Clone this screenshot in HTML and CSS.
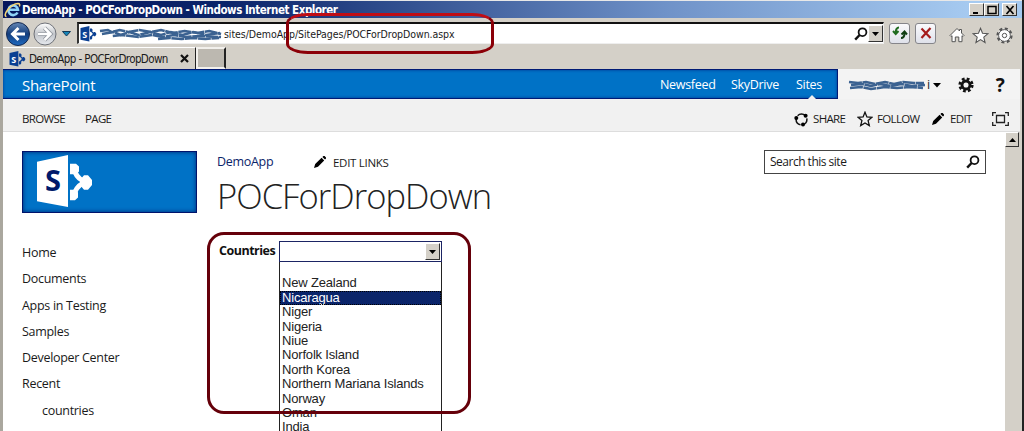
FILE: index.html
```html
<!DOCTYPE html>
<html lang="en">
<head>
  <meta charset="UTF-8">
  <title>DemoApp - POCForDropDown</title>
  <link rel="stylesheet" href="styles.css">
</head>
<body>

<svg class="sprites" width="0" height="0">
  <symbol id="sp" viewBox="0 0 56 56">
    <path class="sp-ring" d="M33 14h4c1 6 4 10 9 13h4M33 42h4c1-6 4-10 9-13"/>
    <path class="sp-node" d="M33 9h6l3 3v5l-3 3h-6zM33 36h6l2 3v5l-3 3h-5zM47 21h4l4 5v5l-4 5h-4l-4-5v-5z"/>
    <path class="sp-door" d="M0 7L31 0v54L0 48z"/>
  </symbol>
  <symbol id="pencil" viewBox="0 0 12 12">
    <path d="M0 12l1.200-4L7.600 1.800l2.600 2.600L4 10.800zM8.400 1l1-1h1.200L12 1.400v1.200l-1 1z"/>
  </symbol>
  <symbol id="glass" viewBox="0 0 14 14">
    <circle cx="8.500" cy="5.200" r="3.900" fill="none" stroke="#111" stroke-width="1.800"/>
    <path d="M5.600 8L1.200 12.600" stroke="#111" stroke-width="2.400"/>
  </symbol>
  <symbol id="star" viewBox="0 0 16 16">
    <path d="M8 1.200l1.900 4.700 5.100.4-3.900 3.300 1.200 5L8 11.900l-4.300 2.700 1.200-5L1 6.300l5.100-.4z"/>
  </symbol>
</svg>

<div class="window">
  <header class="titlebar">
    <svg class="ie" width="18" height="16" viewBox="0 0 18 16">
      <path d="M13.500 10.500A4.800 4.800 0 1 1 14 7.800H5.500" fill="none" stroke="#8fd4f8" stroke-width="2.600"/>
      <path d="M2.500 14.500C-2 14 6 2 14 1.500c2 0 2 1.500 1.300 3" fill="none" stroke="#f6d674" stroke-width="1.500"/>
    </svg>
    <span class="title">DemoApp - POCForDropDown - Windows Internet Explorer</span>
    <div class="window-buttons">
      <button><svg width="12" height="10"><path d="M2 8h5" stroke="#000" stroke-width="2"/></svg></button>
      <button><svg width="12" height="10"><path d="M2 1.500h8v7H2z" fill="none" stroke="#000" stroke-width="1.500"/></svg></button>
      <button class="close"><svg width="12" height="10"><path d="M2.500 1l7 8m0-8l-7 8" stroke="#000" stroke-width="1.700"/></svg></button>
    </div>
  </header>

  <div class="address-row">
    <svg class="nav" width="64" height="26" viewBox="0 0 64 26">
      <defs>
        <linearGradient id="back" x2="0" y2="1"><stop stop-color="#6587b5"/><stop offset=".5" stop-color="#123d7d"/><stop offset="1" stop-color="#1f6ac0"/></linearGradient>
        <linearGradient id="fwd" x2="0" y2="1"><stop stop-color="#fff"/><stop offset=".5" stop-color="#c3c6cb"/><stop offset="1" stop-color="#e6e9ee"/></linearGradient>
      </defs>
      <circle cx="15" cy="13" r="11.500" fill="url(#back)" stroke="#14284f"/>
      <circle cx="42" cy="13" r="11" fill="url(#fwd)" stroke="#6e7178"/>
      <path d="M22 13H10m5.500-6L9.500 13l6 6" fill="none" stroke="#fff" stroke-width="3"/>
      <path d="M35 13h12m-5.500-6l6 6-6 6" fill="none" stroke="#8d929a" stroke-width="4"/>
      <path d="M35 13h12m-5.500-6l6 6-6 6" fill="none" stroke="#fff" stroke-width="2.500"/>
    </svg>
    <svg class="nav-arrow" width="9" height="6"><path d="M.5.500h8L4.500 5z" fill="#1585b8" stroke="#143a58"/></svg>
    <div class="address">
      <svg class="favicon" width="17" height="16" viewBox="0 0 17 16"><use href="#sp" width="17" height="16" /><text x="2.200" y="11.500">S</text></svg>
      <span class="url"><svg class="scribble" width="125" height="14" viewBox="0 0 127 14" preserveAspectRatio="none">
          <path d="M1 4l8-1 4 2 8-2 9 2 11-2 12 2 10-2 12 3 12-2 13 2 12-2 12 3" />
          <path d="M3 7l12-2 7 3 9-3 9 3 12-3 11 3 10-3 12 3 11-3 13 3 14-2" />
          <path d="M14 9l9-1 9 1 8 1 14-2 10 2 12-2 12 2 14-1 22 1" />
          <path d="M60 12l12-1 12 1 12-1 12 1 14-1" />
        </svg><span class="path">sites/DemoApp/SitePages/POCForDropDown.aspx</span></span>
      <svg class="address-glass" width="14" height="14"><use href="#glass" /></svg>
      <button class="drop"><svg width="7" height="4"><path d="M0 0h7L3.500 4z"/></svg></button>
    </div>
    <button class="tool refresh"><svg width="18" height="16" viewBox="0 0 18 16"><path d="M8 2.500C6 2.500 4.700 4 4.700 8M2 6l2.700 3L7.500 6" fill="none" stroke="#1f6b1f" stroke-width="2"/><path d="M10 13c2.500 0 3.500-2 3.500-5M10.500 9.500L13.500 6.500l2.500 3" fill="none" stroke="#123f14" stroke-width="2"/></svg></button>
    <button class="tool"><svg width="14" height="14" viewBox="0 0 14 14"><path d="M2.500 2.500l9 9.500M11.500 2l-9 10" stroke="#a51c1c" stroke-width="2.200"/></svg></button>
    <div class="commands">
      <svg width="16" height="16" viewBox="0 0 16 16"><path d="M1 8.500l7-7 2.500 2.500V2.500h2V6L15 8.500l-1 1-1-.8v6H9.800V10H6.300v4.700H3v-6l-1 .8z"/></svg>
      <svg width="17" height="17"><use href="#star" /></svg>
      <svg width="17" height="17" viewBox="0 0 17 17"><circle cx="8.500" cy="8.500" r="6.900" stroke-width="2.400" stroke-dasharray="3 2.420"/><circle class="gear-body" cx="8.500" cy="8.500" r="5.900"/><circle cx="8.500" cy="8.500" r="2.200"/></svg>
    </div>
  </div>

  <div class="tabs">
    <div class="tab">
      <svg class="favicon" width="17" height="16" viewBox="0 0 17 16"><use href="#sp" width="17" height="16" /><text x="2.200" y="11.500">S</text></svg>
      <span class="tab-title">DemoApp - POCForDropDown</span>
      <svg class="tab-close" width="9" height="9"><path d="M1 1l7 7m0-7L1 8" stroke="#111" stroke-width="2.200"/></svg>
    </div>
    <div class="new-tab"></div>
  </div>

  <main class="page">
    <div class="suite">
      <nav class="suite-bar">
        <span class="brand">SharePoint</span>
        <span class="newsfeed">Newsfeed</span>
        <span class="skydrive">SkyDrive</span>
        <span class="sites active">Sites</span>
      </nav>
      <div class="suite-user">
        <span class="user"><svg class="scribble" width="79" height="14" viewBox="0 0 79 14">
          <path d="M1 4l9 1 8-1 9 2 10-2 9 2 9-2 11 1 10 0"/>
          <path d="M3 7l11-1 9 2 9-2 11 2 10-2 11 2 13-1"/>
          <path d="M2 10l11-1 10 2 14-2 12 1 12-1 14 1"/>
        </svg><span class="name-end">i</span></span>
        <svg class="caret" width="8" height="5"><path d="M0 0h8L4 4.500z"/></svg>
        <svg class="settings" width="16" height="16" viewBox="0 0 16 16"><circle cx="8" cy="8" r="6.200" fill="none" stroke="#111" stroke-width="2.800" stroke-dasharray="2.700 2.170"/><circle cx="8" cy="8" r="4" fill="none" stroke="#111" stroke-width="2.900"/></svg>
        <span class="help">?</span>
      </div>
    </div>

    <div class="ribbon">
      <span class="browse">BROWSE</span>
      <span class="page-tab">PAGE</span>
      <div class="actions">
        <svg width="15" height="15" viewBox="0 0 15 15"><circle cx="7.500" cy="7.500" r="5.400" fill="none" stroke="#111" stroke-width="1.500" stroke-dasharray="8.300 3" stroke-dashoffset="2"/><circle cx="2.300" cy="6" r="2"/><circle cx="11.600" cy="3.700" r="2"/><circle cx="9" cy="12.600" r="2"/></svg>
        <span class="share">SHARE</span>
        <svg class="follow-star" width="16" height="16"><use href="#star" /></svg>
        <span class="follow">FOLLOW</span>
        <svg class="edit-icon" width="12" height="12"><use href="#pencil" /></svg>
        <span class="edit">EDIT</span>
        <svg class="focus" width="17" height="14" viewBox="0 0 17 14"><path d="M4.500 3.500h8v7h-8zM.7 4V.7H4M13 .7h3.300V4M16.300 10v3.300H13M4 13.300H.7V10" fill="none" stroke="#222" stroke-width="1.300"/></svg>
      </div>
    </div>

    <div class="body">
      <aside class="sidebar">
        <div class="logo"><svg width="56" height="54" viewBox="0 0 56 56" preserveAspectRatio="none"><use href="#sp" width="56" height="56" /><text x="8" y="37">S</text></svg></div>
        <ul class="links">
          <li>Home</li>
          <li>Documents</li>
          <li>Apps in Testing</li>
          <li>Samples</li>
          <li>Developer Center</li>
          <li>Recent</li>
          <li class="sub">countries</li>
        </ul>
      </aside>
      <section class="content">
        <div class="top-links">
          <span class="app-link">DemoApp</span>
          <svg width="12" height="12"><use href="#pencil" /></svg>
          <span class="edit-links">EDIT LINKS</span>
        </div>
        <h1>POCForDropDown</h1>
        <div class="field">
          <label>Countries</label>
          <div class="select">
            <div class="select-box"><button class="drop"><svg width="7" height="4"><path d="M0 0h7L3.500 4z"/></svg></button></div>
            <ul class="options">
              <li></li>
              <li>New Zealand</li>
              <li class="selected">Nicaragua</li>
              <li>Niger</li>
              <li>Nigeria</li>
              <li>Niue</li>
              <li>Norfolk Island</li>
              <li>North Korea</li>
              <li>Northern Mariana Islands</li>
              <li>Norway</li>
              <li>Oman</li>
              <li>India</li>
            </ul>
          </div>
        </div>
      </section>
      <div class="search"><span>Search this site</span><svg width="14" height="14"><use href="#glass" /></svg></div>
      <div class="scrollbar"><button><svg width="7" height="4"><path d="M0 4h7L3.500 0z"/></svg></button></div>
    </div>
  </main>
</div>

<div class="mark mark-url"></div>
<div class="mark mark-list"></div>

</body>
</html>
```

FILE: styles.css
```css
* {
  box-sizing: border-box;
}

body {
  margin: 0;
  width: 1024px;
  height: 431px;
  overflow: hidden;
  background: #d4d0c8;
  color: #1a1a1a;
  font: 12.500px/16px "Open Sans", sans-serif;
  letter-spacing: -.3px;
}

svg {
  display: block;
  flex: none;
}

span, label {
  white-space: nowrap;
}

ul {
  list-style: none;
  margin: 0;
  padding: 0;
}

button {
  display: flex;
  align-items: center;
  justify-content: center;
  padding: 0;
  flex: none;
}

.sprites {
  position: absolute;
}

.window {
  height: 431px;
  border-left: 3px solid #aaa79e;
  border-right: 2px solid #222;
  display: flex;
  flex-direction: column;
}

/* sharepoint mark */
.favicon {
  margin-left: 1px;
  color: #0a3f92;
}

.favicon text {
  font: bold 9px "Open Sans", sans-serif;
  fill: #fff;
}

.logo {
  color: #fff;
}

.logo text {
  font: bold 29px "Open Sans", sans-serif;
  fill: #001a6b;
}

.sp-door, .sp-node {
  fill: currentColor;
}

.sp-ring {
  fill: none;
  stroke: currentColor;
  stroke-width: 5;
}

/* title bar */
.titlebar {
  height: 18px;
  flex: none;
  padding-right: 5px;
  border-top: 1px solid #e8e8e8;
  display: flex;
  align-items: center;
  background: linear-gradient(90deg, #06175c, #0a246a 22%, #6f92c8 65%, #a6caf0 95%);
}

.ie {
  margin-left: 1px;
}

.title {
  font: bold 11.500px/16px "DejaVu Sans Condensed", "DejaVu Sans", sans-serif;
  letter-spacing: -.46px;
  color: #fff;
}

.window-buttons {
  margin-left: auto;
  display: flex;
}

.window-buttons button, .drop, .scrollbar button {
  background: #d4d0c8;
  border: 1px solid;
  border-color: #fff #333 #333 #fff;
}

.window-buttons button {
  width: 15px;
  height: 13px;
}

.window-buttons .close {
  margin-left: 3px;
}

/* address bar */
.address-row {
  height: 29px;
  flex: none;
  display: flex;
  align-items: center;
  padding-top: 3px;
}

.nav-arrow {
  margin: 0 6px 0 -5px;
}

.address {
  width: 807px;
  height: 22px;
  margin-top: -2px;
  background: #fff;
  border: 1px solid #eee;
  border-top: 2px solid #111;
  border-left: 2px solid #333;
  display: flex;
  align-items: center;
}

.url {
  display: flex;
  align-items: center;
  margin-left: 2px;
  padding-top: 1px;
  font: 10.500px/16px "DejaVu Sans Condensed", "DejaVu Sans", sans-serif;
  letter-spacing: -.06px;
}

.scribble path {
  fill: none;
  stroke: #3b6291;
  stroke-width: 2.500;
  stroke-dasharray: 13 .6;
}

.address-glass {
  margin-left: auto;
}

.drop {
  width: 15px;
  height: 17px;
}

.tool {
  width: 21px;
  height: 21px;
  margin-left: 5px;
  margin-top: -2px;
  border: 1px solid #85858a;
  border-radius: 3px;
  background: linear-gradient(#fafafc, #dfe1ea);
}

.commands {
  display: flex;
  gap: 7px;
  margin: 2px 0 0 13px;
  fill: #fff;
  stroke: #555;
}

.commands .gear-body {
  stroke-width: 1;
}

/* tabs */
.tabs {
  height: 22px;
  flex: none;
  display: flex;
}

.tab {
  width: 193px;
  display: flex;
  align-items: center;
  padding-left: 5px;
  border-top: 1px solid #fff;
  border-right: 1px solid #222;
}

.tab-title {
  width: 147px;
  margin-left: 3px;
  padding-top: 1px;
  font: 11.500px/16px "DejaVu Sans Condensed", "DejaVu Sans", sans-serif;
  letter-spacing: -.6px;
}

.tab-close {
  margin-left: 4px;
}

.new-tab {
  width: 30px;
  background: #bcb8b0;
  border: 2px solid #f2f0ec;
  border-right-color: #222;
}

/* page */
.page {
  flex: 1;
  min-height: 0;
  margin-right: 2px;
  background: #fff;
  display: flex;
  flex-direction: column;
}

.suite {
  height: 30px;
  flex: none;
  display: flex;
  background: #f3f3f3;
}

.suite-bar {
  width: 835px;
  height: 30px;
  display: flex;
  align-items: center;
  padding: 2px 0 0 19px;
  background: #0072c6;
  border: 1px solid #001a75;
  border-left: 0;
  box-shadow: inset 0 0 3px #00308c;
  color: #fff;
}

.brand {
  width: 638px;
  font-size: 15px;
  letter-spacing: -.35px;
}

.newsfeed {
  width: 71px;
}

.skydrive {
  width: 65px;
}

.active {
  position: relative;
}

.active::after {
  content: "";
  position: absolute;
  left: 12px;
  bottom: -6px;
  border: 4px solid transparent;
  border-top: 0;
  border-bottom-color: #f1f1f1;
}

.suite-user {
  display: flex;
  align-items: center;
  padding: 2px 0 0 10px;
}

.user {
  display: flex;
  align-items: center;
}

.caret {
  margin-left: 3px;
}

.settings {
  margin-left: 17px;
}

.help {
  margin-left: 22px;
  font: bold 19px/20px "Open Sans", sans-serif;
  color: #111;
}

.ribbon {
  height: 33px;
  flex: none;
  display: flex;
  align-items: center;
  padding: 8px 11px 0 19px;
  background: #f1f1f1;
  border-bottom: 1px solid #ddd;
  font-size: 11.500px;
  letter-spacing: -.65px;
}

.browse {
  width: 63px;
}

.actions {
  margin-left: auto;
  display: flex;
  align-items: center;
}

.share {
  width: 40px;
  margin-left: 4px;
}

.follow-star {
  margin-left: 4px;
  fill: none;
  stroke: #111;
  stroke-width: 1.300;
}

.follow {
  width: 50px;
  margin-left: 4px;
}

.edit-icon {
  margin-left: 5px;
}

.edit {
  width: 32px;
  margin-left: 6px;
}

.focus {
  margin-left: 10px;
}

.body {
  flex: 1;
  display: flex;
  min-height: 0;
}

.sidebar {
  width: 214px;
  padding: 19px 0 0 19px;
}

.logo {
  width: 175px;
  height: 62px;
  padding: 3px 0 0 14px;
  background: #0072c6;
  border: 1px solid #00136b;
  box-shadow: inset 0 0 4px #00246f;
}

.links {
  padding-top: 27px;
  line-height: 26.300px;
}

.sub {
  padding-left: 20px;
}

.content {
  width: 547px;
  padding-top: 22px;
}

.top-links {
  display: flex;
  align-items: center;
  height: 16px;
}

.app-link {
  width: 97px;
  color: #0a246a;
}

.edit-links {
  margin: 2px 0 0 7px;
  font-size: 11.500px;
  letter-spacing: -.3px;
}

h1 {
  margin: 4px 0 0;
  font: 300 34.500px/44px "Open Sans", sans-serif;
  letter-spacing: -.95px;
  color: #222;
}

.field {
  display: flex;
  margin: 23px 0 0 2px;
}

.field label {
  width: 60px;
  line-height: 19px;
  font-weight: bold;
  letter-spacing: -.5px;
  color: #111;
}

.select {
  width: 163px;
}

.select-box {
  height: 21px;
  border: 1px solid #1b2464;
  padding: 1px;
  display: flex;
  justify-content: flex-end;
}

.options {
  border: 1px solid #222;
  border-top: 0;
  font: 13px/14.400px "Liberation Sans", Arial, sans-serif;
  letter-spacing: -.18px;
}

.options li {
  height: 14.400px;
  padding-left: 2px;
  color: #222;
}

.options .selected {
  background: #0a246a;
  color: #fff;
  outline: 1px dotted #000;
  outline-offset: -1px;
}

.search {
  width: 222px;
  height: 24px;
  margin-top: 18px;
  padding: 0 5px;
  border: 1px solid #444;
  display: flex;
  align-items: center;
  justify-content: space-between;
  font-size: 12px;
}

.search span {
  letter-spacing: -.5px;
}

.scrollbar {
  width: 15px;
  margin-left: auto;
  background: #d4d0c8;
}

.scrollbar button {
  width: 14px;
  height: 15px;
}

/* hand drawn highlights over the page */
.mark {
  position: absolute;
  border: 3px solid #65000a;
}

.mark-url {
  left: 286px;
  top: 13px;
  width: 208px;
  height: 41px;
  border-color: #c00d14 #8b0008 #8b0008;
  border-radius: 22px / 10px;
}

.mark-list {
  left: 207px;
  top: 232px;
  width: 264px;
  height: 182px;
  border-radius: 17px;
}
```
